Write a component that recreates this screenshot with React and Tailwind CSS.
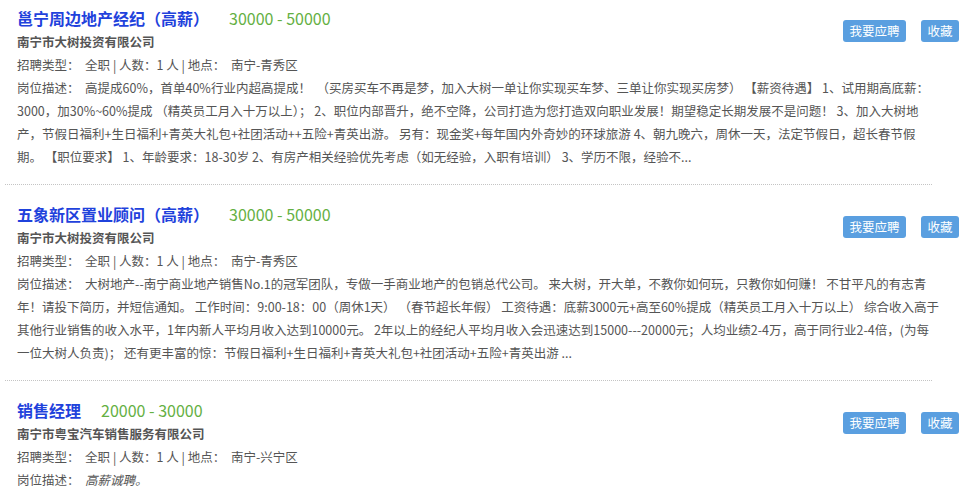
const jobs = [
  {
    id: 1,
    title: "邕宁周边地产经纪（高薪）",
    salary: "30000 - 50000",
    company: "南宁市大树投资有限公司",
    place: "南宁-青秀区",
    desc: [
      "高提成60%，首单40%行业内超高提成！  （买房买车不再是梦，加入大树一单让你实现买车梦、三单让你实现买房梦） 【薪资待遇】 1、试用期高底薪：",
      "3000，加30%~60%提成 （精英员工月入十万以上）； 2、职位内部晋升，绝不空降，公司打造为您打造双向职业发展！期望稳定长期发展不是问题！ 3、加入大树地",
      "产，节假日福利+生日福利+青英大礼包+社团活动++五险+青英出游。 另有：现金奖+每年国内外奇妙的环球旅游 4、朝九晚六，周休一天，法定节假日，超长春节假",
      "期。 【职位要求】 1、年龄要求：18-30岁 2、有房产相关经验优先考虑（如无经验，入职有培训） 3、学历不限，经验不...",
    ],
  },
  {
    id: 2,
    title: "五象新区置业顾问（高薪）",
    salary: "30000 - 50000",
    company: "南宁市大树投资有限公司",
    place: "南宁-青秀区",
    desc: [
      "大树地产--南宁商业地产销售No.1的冠军团队，专做一手商业地产的包销总代公司。 来大树，开大单，不教你如何玩，只教你如何赚！ 不甘平凡的有志青",
      "年！请投下简历，并短信通知。 工作时间：9:00-18：00（周休1天） （春节超长年假） 工资待遇：底薪3000元+高至60%提成（精英员工月入十万以上） 综合收入高于",
      "其他行业销售的收入水平，1年内新人平均月收入达到10000元。 2年以上的经纪人平均月收入会迅速达到15000---20000元；人均业绩2-4万，高于同行业2-4倍，(为每",
      "一位大树人负责)； 还有更丰富的惊：节假日福利+生日福利+青英大礼包+社团活动+五险+青英出游 ...",
    ],
  },
  {
    id: 3,
    title: "销售经理",
    salary: "20000 - 30000",
    company: "南宁市粤宝汽车销售服务有限公司",
    place: "南宁-兴宁区",
    desc: ["高薪诚聘。"],
    italic: true,
  },
];

function JobItem({ job, first, last }) {
  return (
    <div>
      <div
        className={`flex pl-[17px] pr-[11px] pb-[16px] ${
          first ? "pt-[6px]" : "pt-[17px]"
        }`}
      >
        <div className="flex-1 min-w-0 text-[12.5px] leading-[23px] text-[#555]">
          <div className="flex items-baseline h-[24px] leading-[24px]">
            <span className="text-[16px] font-bold text-[#1f42dc]">{job.title}</span>
            <span className="ml-[20px] text-[16px] text-[#64b043]">{job.salary}</span>
          </div>
          <div className="font-bold">{job.company}</div>
          <div className="whitespace-pre">
            {"招聘类型：  全职 | 人数：1 人 | 地点：  " + job.place}
          </div>
          <div className="whitespace-pre">
            {job.desc.map((line, i) => (
              <div key={i}>
                {i === 0 && <span>{"岗位描述：  "}</span>}
                <span className={job.italic ? "italic" : ""}>{line}</span>
              </div>
            ))}
          </div>
        </div>
        <div className="flex gap-[15px] mt-[14px] shrink-0 self-start">
          <button className="w-[63px] h-[22px] leading-[22px] rounded-[3px] bg-[#5a9fe0] text-white text-[12.5px]">
            我要应聘
          </button>
          <button className="w-[38px] h-[22px] leading-[22px] rounded-[3px] bg-[#5a9fe0] text-white text-[12.5px]">
            收藏
          </button>
        </div>
      </div>
      {!last && (
        <div className="ml-[5px] w-[927px] border-b border-dotted border-[#c4c4c4]" />
      )}
    </div>
  );
}

export default function App() {
  return (
    <div
      className="w-[970px] h-[498px] overflow-hidden bg-white"
      style={{ fontFamily: '"Noto Sans CJK SC", "Noto Sans", sans-serif' }}
    >
      {jobs.map((job, i) => (
        <JobItem key={job.id} job={job} first={i === 0} last={i === jobs.length - 1} />
      ))}
    </div>
  );
}
